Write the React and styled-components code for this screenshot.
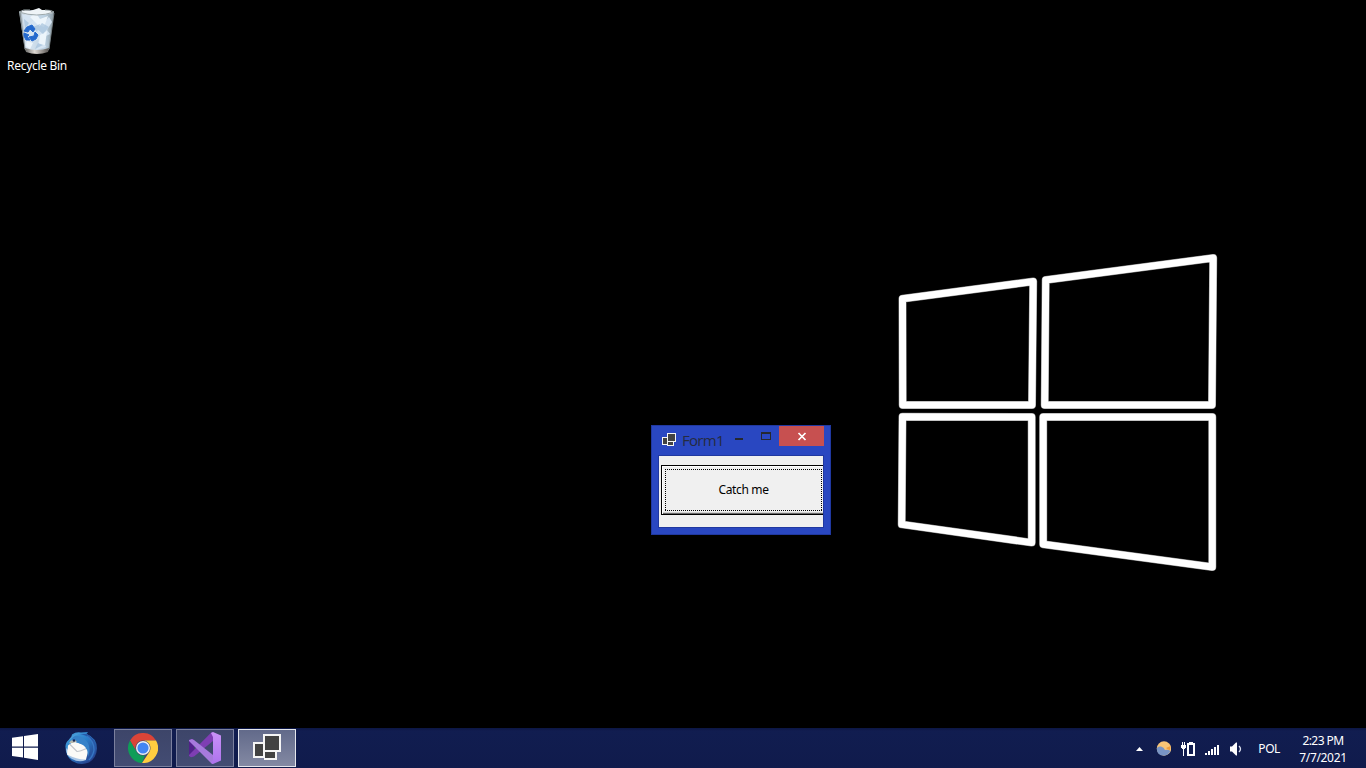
import React from 'react';
import styled, { createGlobalStyle } from 'styled-components';

const Global = createGlobalStyle`
  * { box-sizing: border-box; }
  body { margin: 0; background: #000; overflow: hidden; font-family: "Noto Sans", "Open Sans", sans-serif; font-size: 12px; }
  svg { display: block; flex: none; }
`;

const Screen = styled.div`
  width: 1366px;
  height: 768px;
  display: flex;
  flex-direction: column;
  background: #000;
`;

const Desktop = styled.main`
  position: relative;
  flex: 1;
  overflow: hidden;
`;

const Wallpaper = styled.svg`
  position: absolute;
  left: 890px;
  top: 240px;
  filter: blur(0.7px);
`;

const Shortcut = styled.div`
  width: 74px;
  padding-top: 7px;
  display: flex;
  flex-direction: column;
  align-items: center;
`;

const Label = styled.span`
  color: ${(p) => p.$color || '#fff'};
  font-family: ${(p) => p.$font || '"Noto Sans"'}, sans-serif;
  font-size: ${(p) => p.$size || 12}px;
  line-height: ${(p) => p.$line || 17}px;
  letter-spacing: ${(p) => p.$track || 0}px;
  white-space: nowrap;
`;

const Window = styled.section`
  position: absolute;
  left: 651px;
  top: 425px;
  width: 180px;
  height: 110px;
  display: flex;
  flex-direction: column;
  padding: 0 6px 6px;
  background: #2947c1;
  border: 1px solid #2038a0;
`;

const TitleBar = styled.header`
  height: 29px;
  display: flex;
  align-items: flex-start;
`;

const TitleIcon = styled.div`
  padding: 7px 6px 0 4px;
`;

const Title = styled.div`
  width: 42px;
  padding-top: 2px;
`;

const Caption = styled.div`
  flex: none;
  width: ${(p) => p.$width}px;
  height: 20px;
  background: ${(p) => p.$bg || 'transparent'};
`;

const Client = styled.div`
  flex: 1;
  padding: 9px 0 0 2px;
  overflow: hidden;
  background: #f0f0f0;
  border: 1px solid #2038a0;
`;

const CatchButton = styled.button`
  display: flex;
  align-items: flex-start;
  width: 165px;
  height: 50px;
  padding: 3px;
  border: 1px solid #000;
  border-radius: 0;
  background: #f0f0f0;
  box-shadow: inset 1px 1px #fff, inset -1px -1px #696969, inset -2px -2px #d0d0d0;
`;

const FocusArea = styled.span`
  display: flex;
  width: 157px;
  height: 42px;
  padding-bottom: 1px;
  align-items: center;
  justify-content: center;
  background:
    repeating-linear-gradient(90deg, #000 0 1px, transparent 1px 2px) top / 100% 1px no-repeat,
    repeating-linear-gradient(90deg, #000 0 1px, transparent 1px 2px) bottom / 100% 1px no-repeat,
    repeating-linear-gradient(#000 0 1px, transparent 1px 2px) left / 1px 100% no-repeat,
    repeating-linear-gradient(#000 0 1px, transparent 1px 2px) right / 1px 100% no-repeat;
`;

const Taskbar = styled.footer`
  height: 40px;
  display: flex;
  align-items: center;
  background: linear-gradient(#0c1644, #111d50 3px, #101b4c);
`;

const StartButton = styled.div`
  width: 50px;
  padding: 0 0 2px 12px;
`;

const PinnedApp = styled.div`
  width: 64px;
  padding-left: 14px;
`;

const TaskButton = styled.div`
  width: 58px;
  height: 38px;
  margin-right: 4px;
  display: flex;
  align-items: center;
  justify-content: center;
  border: 1px solid ${(p) => (p.$active ? '#e4e6ec' : '#7b809e')};
  background: ${(p) => (p.$active ? 'linear-gradient(#626a8a, #8389a3)' : 'linear-gradient(#3d4569, #434c73)')};
`;

const FormGlyph = styled.div`
  padding-bottom: 2px;
`;

const Tray = styled.div`
  margin-left: auto;
  height: 40px;
  display: flex;
  align-items: center;
`;

const TrayItem = styled.div`
  width: ${(p) => p.$width}px;
  padding-top: 1px;
`;

const Clock = styled.time`
  width: 86px;
  padding-top: 2px;
  display: flex;
  flex-direction: column;
  align-items: center;
`;

function RecycleBin() {
  return (
    <svg width="38" height="48" viewBox="0 0 38 48">
      <defs>
        <linearGradient id="bin" x2="1"><stop stopColor="#9ba7ae" /><stop offset=".2" stopColor="#dce8f3" /><stop offset=".75" stopColor="#bacfe0" /><stop offset="1" stopColor="#8a989f" /></linearGradient>
        <linearGradient id="base" x2="1"><stop stopColor="#696967" /><stop offset=".4" stopColor="#ded9d3" /><stop offset="1" stopColor="#56524f" /></linearGradient>
      </defs>
      <path d="M1 5 Q18 1 36 5 L31 43 Q19 49 7 43Z" fill="url(#bin)" />
      <path d="M3 5Q5 2 12 4L18 2L21 1L24 3L31 3L35 6Q20 10 3 6Z" fill="#eff4f7" />
      <path d="M4 7L13 10L8 18L16 13L24 17L31 10L34 15L29 23L32 27L24 31L28 40L18 43L21 32L13 35L7 28Z" fill="#d5e4f2" />
      <path d="M12 10L18 6L22 12L30 9L26 20L20 18ZM22 28L29 24L27 38L21 37ZM9 34L15 36L12 42L8 39Z" fill="#edf5fb" />
      <path d="M24 16L31 20L25 27L19 22ZM6 12L11 16L7 22ZM25 38L20 36L17 42ZM15 20L22 17L19 25Z" fill="#9fbdd8" opacity=".65" />
      <path d="M1 5Q19 11 36 5M1 5Q5 2 12 3M27 3Q34 3 36 5" fill="none" stroke="#9da8ab" />
      <path d="M2 6L7 42Q19 47 31 42L36 6" fill="none" stroke="#7b8588" strokeWidth=".9" />
      <path d="M7 41Q19 45 31 41L30 45Q19 49 8 45Z" fill="url(#base)" />
      <path d="M9 20L14 18L17 22L15 25L12 22L10 25L6 24ZM17 25L20 28L18 32L14 34L11 30L16 29ZM6 26L11 28L9 29L12 33L8 33L6 29Z" fill="#2469cd" stroke="#2469cd" strokeWidth="1" />
    </svg>
  );
}

function FormIcon({ width, height, large }) {
  if (large) {
    return (
      <svg width={width} height={height} viewBox="0 0 28 26" shapeRendering="crispEdges">
        <path d="M0 8h11v16H0zM11 18h13v8H11z" fill="#f5f5f5" />
        <path d="M2 10h8v12H2zM12 18h10v6H12z" fill="#424242" />
        <path d="M10 0h18v18H10z" fill="#f5f5f5" /><path d="M12 2h14v14H12z" fill="#424242" />
      </svg>
    );
  }
  return (
    <svg width={width} height={height} viewBox="0 0 14 13" shapeRendering="crispEdges">
      <path d="M0 4h6v8H0zM5 8h7v5H5z" fill="#f5f5f5" />
      <path d="M1 5h4v6H1zM6 9h5v3H6z" fill="#424242" />
      <path d="M5 0h9v9H5z" fill="#f5f5f5" /><path d="M6 1h7v7H6z" fill="#424242" />
    </svg>
  );
}

function WindowsLogo() {
  return (
    <svg width="26" height="26" viewBox="0 0 26 26">
      <path d="M0 3.8L11 2.3V12.4H0ZM12 2.1L26 0V12.4H12ZM0 13.7H11V23.6L0 22.1ZM12 13.7H26V26L12 23.8Z" fill="#fff" />
    </svg>
  );
}

function Thunderbird() {
  return (
    <svg width="34" height="34" viewBox="0 0 34 34">
      <defs><linearGradient id="bird" x2=".9" y2="1"><stop stopColor="#4ba6de" /><stop offset=".45" stopColor="#2b7fcb" /><stop offset="1" stopColor="#25357f" /></linearGradient></defs>
      <path d="M1.5 16Q1 11 7 7L8 3.5Q12 .5 17 1.5L24 1L22.5 3Q33 7 33 17.5Q32.5 27 25 31.5Q16 35 8 30Q1.500 25 1.500 16Z" fill="url(#bird)" />
      <path d="M16 3Q29 5 29 17Q28 26 20 31Q31 29 32 17Q31 7 23 3Z" fill="#2858a8" />
      <path d="M23 5Q30 10 30 19Q29 25 25 29" fill="none" stroke="#3878c4" strokeWidth="1.3" />
      <path d="M2 17Q2 25 8 28Q15 32 22 29L22 24L4 19Z" fill="#aac6e5" />
      <path d="M4 14.500L9.500 10.500L23.500 15L25 17L22 28.500Q14 29 3 23.500Z" fill="#fbfaf7" />
      <path d="M5.500 13L13 20.500Q14 21 24 17" fill="none" stroke="#c3c6ca" strokeWidth="1.1" />
      <path d="M8 10Q7 5 12 5Q19 4 24 12Q27 18 24 26Q24 17 19 14Q14 11 8 10Z" fill="#3682c9" />
      <path d="M7 9.500L5 12L9 12L13 10.500L11 9Z" fill="#b6b7aa" /><circle cx="10" cy="9.500" r="1.2" fill="#182857" />
      <path d="M4.500 10Q8 2 18 2Q11 3.500 7 8Z" fill="#4a9cd6" />
    </svg>
  );
}

function Chrome() {
  return (
    <svg width="30" height="30" viewBox="0 0 30 30">
      <path d="M2 7.5A15 15 0 0 1 28 7.5H15A7.5 7.5 0 0 0 8.5 18.8Z" fill="#db4437" />
      <path d="M2 7.5L8.5 18.7A7.5 7.5 0 0 0 17 22.2L14 30A15 15 0 0 1 2 7.5Z" fill="#0f9d58" />
      <path d="M15 7.5H28A15 15 0 0 1 14 30L21.5 18.7A7.5 7.5 0 0 0 15 7.5Z" fill="#ffcd40" />
      <circle cx="15" cy="15" r="7" fill="#f1f1f1" /><circle cx="15" cy="15" r="5.6" fill="#4285f4" />
    </svg>
  );
}

function VisualStudio() {
  return (
    <svg width="32" height="32" viewBox="0 0 32 32">
      <defs><linearGradient id="studio" x2="0" y2="1"><stop stopColor="#ca92f8" /><stop offset="1" stopColor="#ae73ed" /></linearGradient></defs>
      <path d="M0 8L3 6.7L5 8V23L2 25L0 24Z" fill="#52218a" />
      <path d="M0 23V24L2 25.2L5 24.5L24 9V0L22 .7Z" fill="#7e3eb3" />
      <path d="M0 9V8L3 7L5 8L24 23V32L22 31Z" fill="#a77adc" />
      <path d="M24 0L32 3.5V28.5L24 32Q22 32 22 30L24 28V5L22 1Z" fill="url(#studio)" />
    </svg>
  );
}

export default function App() {
  return (
    <Screen>
      <Global />
      <Desktop>
        <Wallpaper width="340" height="340" viewBox="890 240 340 340">
          <g fill="none" strokeLinejoin="round">
            {[['#888', 8], ['#fff', 7]].map(([color, width]) => (
              <path key={color} stroke={color} strokeWidth={width} d="M902.5 298.7L1033.2 281.5L1032 405H902.7ZM1045.7 280L1213.2 258L1212 405H1044.7ZM902.5 416.7L1031.7 417V542.6L901.7 524.4ZM1043.2 417H1212.3V567L1043.2 544.2Z" />
            ))}
          </g>
        </Wallpaper>
        <Shortcut><RecycleBin /><Label $line={22} $track={-0.31}>Recycle Bin</Label></Shortcut>
        <Window>
          <TitleBar>
            <TitleIcon><FormIcon width={14} height={13} /></TitleIcon>
            <Title><Label $color="#252b40" $font='"Open Sans"' $size={15} $line={24} $track={-0.7}>Form1</Label></Title>
            <Caption $width={28}>
              <svg width="28" height="20" shapeRendering="crispEdges"><path d="M11 12h8v2h-8z" fill="#252830" /></svg>
            </Caption>
            <Caption $width={27}>
              <svg width="27" height="20" shapeRendering="crispEdges"><path fillRule="evenodd" d="M9 6h10v8H9zM10 8v5h8V8z" fill="#252830" /></svg>
            </Caption>
            <Caption $width={45} $bg="#c75050">
              <svg width="45" height="20"><path d="M19.500 7L26.500 14M26.500 7L19.500 14" stroke="#fff" strokeWidth="1.7" /></svg>
            </Caption>
          </TitleBar>
          <Client><CatchButton><FocusArea><Label $color="#000" $track={-0.35}>Catch me</Label></FocusArea></CatchButton></Client>
        </Window>
      </Desktop>
      <Taskbar>
        <StartButton><WindowsLogo /></StartButton>
        <PinnedApp><Thunderbird /></PinnedApp>
        <TaskButton><Chrome /></TaskButton>
        <TaskButton><VisualStudio /></TaskButton>
        <TaskButton $active><FormGlyph><FormIcon width={28} height={26} large /></FormGlyph></TaskButton>
        <Tray>
          <TrayItem $width={20}><svg width="7" height="4"><path d="M0 4L3.5 0L7 4Z" fill="#fff" /></svg></TrayItem>
          <TrayItem $width={25}>
            <svg width="15" height="15"><circle cx="8" cy="7.5" r="7.2" fill="#f8c476" /><path d="M.8 8Q1 5 5 5.500Q8 6 9 9Q12 8 14.500 10Q12 14.500 8 14.700Q1 14.500 .8 8Z" fill="#7995c5" /><path d="M10 7L14.500 5L14 9L12 8.500Z" fill="#ee9d3d" /></svg>
          </TrayItem>
          <TrayItem $width={24}>
            <svg width="15" height="15" shapeRendering="crispEdges">
              <path d="M1 1h1v3h1V1h1v3h1v3H4v1H3v7H2V8H1V7H0V4h1z" fill="#fff" />
              <path d="M8 1h4v1h2v13H6V2h2zM8 4v9h4V4z" fillRule="evenodd" fill="#fff" />
            </svg>
          </TrayItem>
          <TrayItem $width={25}>
            <svg width="15" height="12" shapeRendering="crispEdges"><path d="M0 10h2v2H0zM3 8h2v4H3zM6 6h2v6H6zM9 4h2v8H9zM12 2h2v10h-2z" fill="#fff" /></svg>
          </TrayItem>
          <TrayItem $width={28}>
            <svg width="14" height="14"><path d="M0 4.5H2L6 .5H7V13.5H6L2 9.5H0Z" fill="#fff" /><path d="M9 4Q12 7 9 10" fill="none" stroke="#d8dcec" strokeWidth="1.3" /></svg>
          </TrayItem>
          <Label $track={-0.4}>POL</Label>
          <Clock><Label $track={-0.55}>2:23 PM</Label><Label $track={-0.35}>7/7/2021</Label></Clock>
        </Tray>
      </Taskbar>
    </Screen>
  );
}
